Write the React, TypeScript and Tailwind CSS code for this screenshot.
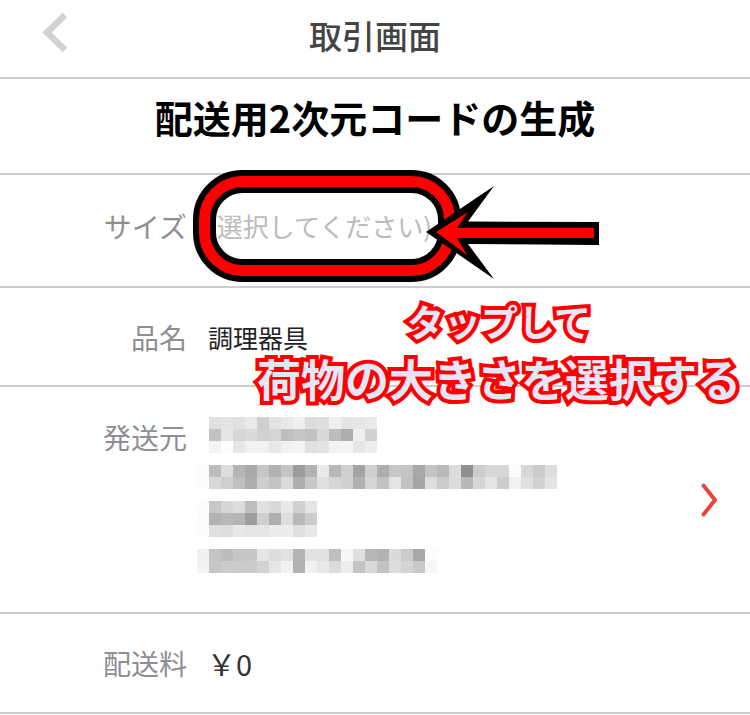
const font = "font-['Noto_Sans_CJK_JP','Liberation_Sans',sans-serif]"

// ぼかし部分 (発送元の住所) 12pxモザイク
const mosaic: { indent: number; top: number; rows: string[] }[] = [
  {
    indent: 12,
    top: 0,
    rows: [
      'e0 e4 e0 ea cf e2 e9 ef dc de ef e5 e6 ea',
      'c3 e6 d6 da d1 d5 be c6 c2 d8 bd ae ef d2',
      'f4 fd e6 f2 f2 e8 f2 f3 e0 e4 f3 f4 e6 ee'
    ]
  },
  {
    indent: 0,
    top: 12,
    rows: [
      'fb bc dd b4 a9 c6 b1 c4 9c b2 e9 b8 cf a3 cf ae c6 c4 a8 c4 ba dc 8f cc d6 d7 fb d8 cb de',
      'fc d8 cf bf ae cf c4 da ae c8 df d6 d0 b1 d5 c2 e4 c2 a6 de cb dd b8 d5 e4 cd f2 e0 d1 e4'
    ]
  },
  {
    indent: 0,
    top: 12,
    rows: [
      'fc c8 d6 dc bd e0 d8 e8 d0 e4',
      'fb b2 b9 b4 9e cf ae de b9 cc',
      'fc e0 de e8 e5 e5 ec ed df e8'
    ]
  },
  {
    indent: 0,
    top: 12,
    rows: [
      'f0 c4 bc c6 c6 e6 dc e2 b4 e2 e2 bf f6 e0 b8 b2 da cc a8 fc',
      'f3 c6 cc cb ca d2 e6 f2 b2 f2 e8 dc ed c4 d8 c2 dc d4 c8 f6'
    ]
  }
]

function Mosaic() {
  return (
    <div className="flex flex-col">
      {mosaic.map((block, i) => (
        <div key={i} style={{ marginLeft: block.indent, marginTop: block.top }}>
          {block.rows.map((row, j) => (
            <div key={j} className="flex">
              {row.split(' ').map((v, k) => (
                <div key={k} className="w-3 h-3" style={{ backgroundColor: `#${v}${v}${v}` }} />
              ))}
            </div>
          ))}
        </div>
      ))}
    </div>
  )
}

function Label({ children }: { children: string }) {
  return <div className="w-[187px] shrink-0 text-right text-[28px] leading-[38px] text-[#8e8e93]">{children}</div>
}

export default function App() {
  return (
    <div className={`relative w-[750px] h-[715px] bg-white overflow-hidden ${font}`}>
      <header className="grid grid-cols-[1fr_auto_1fr] items-center h-[79px] border-b-2 border-[#cccccc]">
        <svg width="80" height="65" viewBox="0 0 80 65" className="-mt-[13px] self-center">
          <path d="M65 15 47 32.5 65 50" fill="none" stroke="#d2d2d2" strokeWidth="6.5" />
        </svg>
        <h1 className="text-[33px] font-medium text-[#444444] -mt-[5px]">取引画面</h1>
        <div />
      </header>

      <div className="flex items-center justify-center h-[96px] border-b-2 border-[#cccccc]">
        <h2 className="text-[38px] font-bold text-black -mt-[20px] whitespace-nowrap">配送用2次元コードの生成</h2>
      </div>

      <div className="flex items-center h-[113px] border-b-2 border-[#cccccc]">
        <div className="-mt-[10px]">
          <Label>サイズ</Label>
        </div>
        <div className="ml-[21px] -mt-[10px] text-[26px] leading-[38px] text-[#bbbbbb] whitespace-nowrap">(選択してください)</div>
      </div>

      <div className="flex items-center h-[99px] border-b-2 border-[#cccccc]">
        <Label>品名</Label>
        <div className="ml-[21px] text-[25px] leading-[32px] text-[#222222]">調理器具</div>
      </div>

      <div className="flex h-[227px] border-b-2 border-[#cccccc]">
        <div className="pt-[31px]">
          <Label>発送元</Label>
        </div>
        <div className="ml-[10px] pt-[30px]">
          <Mosaic />
        </div>
        <div className="ml-auto mr-[32px] self-center">
          <svg width="17" height="34" viewBox="0 0 17 34">
            <path d="M2.5 2.5 14 17 2.5 31.5" fill="none" stroke="#e8473f" strokeWidth="4" strokeLinecap="round" strokeLinejoin="round" />
          </svg>
        </div>
      </div>

      <div className="flex items-center h-[100px] border-b-2 border-[#cccccc]">
        <Label>配送料</Label>
        <div className="ml-[20px] text-[29px] leading-[38px] text-[#333333]">￥0</div>
      </div>

      {/* annotation: ring and arrow drawn over the screenshot */}
      <svg width="750" height="715" viewBox="0 0 750 715" className="absolute left-0 top-0 pointer-events-none">
        <rect x="204.5" y="181.5" width="245" height="89" rx="38" fill="none" stroke="#000000" strokeWidth="23" />
        <rect x="204.5" y="181.5" width="245" height="89" rx="38" fill="none" stroke="#ff0000" strokeWidth="11" />
        <path d="M426 232 494 186 468 221.5 599 222 599 245 468 244 494 279Z" fill="#000000" />
        <path d="M436 232 468 212 457 228 594 228 594 238 457 238 467 255Z" fill="#ff0000" />
      </svg>

      <div className="absolute left-[240px] top-[294px] w-[518px] flex flex-col items-center font-bold text-[#e6e6fa] [-webkit-text-stroke:8px_#ff0000] [paint-order:stroke_fill] whitespace-nowrap">
        <div className="text-[37px] leading-[54px]">タップして</div>
        <div className="mt-[7px] text-[44px] leading-[46px]">荷物の大きさを選択する</div>
      </div>
    </div>
  )
}
